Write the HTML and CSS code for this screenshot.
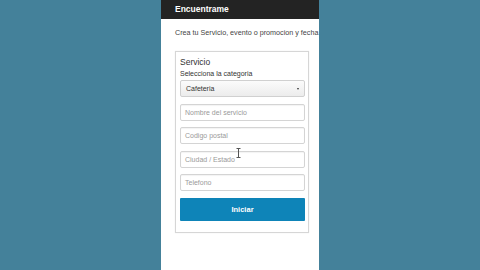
FILE: index.html
```html
<!DOCTYPE html>
<html>
<head>
<meta charset="utf-8">
<link rel="stylesheet" href="styles.css">
</head>
<body>
<div class="stage">
  <div class="phone">
    <div class="topbar">Encuentrame</div>
    <p class="intro">Crea tu Servicio, evento o promocion y fecha</p>
    <div class="card">
      <div class="title">Servicio</div>
      <div class="label">Selecciona la categoria</div>
      <div class="select"><span>Cafeteria</span><span class="caret"></span></div>
      <div class="input">Nombre del servicio</div>
      <div class="input">Codigo postal</div>
      <div class="input">Ciudad / Estado</div>
      <div class="input">Telefono</div>
      <div class="button">Iniciar</div>
    </div>
    <svg class="ibeam" width="5" height="10" viewBox="0 0 5 10"><path d="M0.5 0.5h4M2.5 0.5v9M0.5 9.5h4" stroke="#555" stroke-width="1" fill="none"/></svg>
  </div>
</div>
</body>
</html>
```

FILE: styles.css
```css
html, body {
  margin: 0;
  padding: 0;
}
body {
  background: #44819a;
  width: 480px;
  height: 270px;
  overflow: hidden;
  font-family: "Liberation Sans", Arial, sans-serif;
}
.stage {
  display: flex;
  justify-content: center;
  height: 270px;
}
.phone {
  position: relative;
  width: 158px;
  height: 270px;
  background: #fff;
  overflow: hidden;
}
.topbar {
  height: 19px;
  background: #232323;
  color: #fff;
  font-weight: bold;
  font-size: 8.5px;
  line-height: 19px;
  padding-left: 14px;
}
.intro {
  margin: 0;
  padding: 9px 0 0 14px;
  height: 23px;
  box-sizing: border-box;
  font-size: 7.2px;
  line-height: 10px;
  color: #444;
  white-space: nowrap;
}
.card {
  margin: 9px 0 0 14px;
  width: 134px;
  height: 182px;
  box-sizing: border-box;
  border: 1px solid #d6d6d6;
  box-shadow: 0 0 1px #e4e4e4;
  padding: 5px 3px 0 4px;
  display: flex;
  flex-direction: column;
}
.title {
  font-size: 8.5px;
  line-height: 11px;
  color: #333;
}
.label {
  margin-top: 1px;
  font-size: 7px;
  line-height: 9px;
  color: #333;
}
.select {
  margin-top: 2px;
  height: 17px;
  flex: none;
  box-sizing: border-box;
  border: 1px solid #d0d0d0;
  border-radius: 2px;
  background: linear-gradient(#fbfbfb, #ececec);
  font-size: 7px;
  color: #333;
  padding: 0 5px 0 5px;
  display: flex;
  align-items: center;
  justify-content: space-between;
}
.caret {
  width: 0;
  height: 0;
  border-left: 1.5px solid transparent;
  border-right: 1.5px solid transparent;
  border-top: 2px solid #333;
}
.input {
  margin-top: 6.5px;
  height: 17px;
  flex: none;
  box-sizing: border-box;
  border: 1px solid #d4d4d4;
  border-radius: 2px;
  box-shadow: inset 0 1px 1px rgba(0,0,0,0.05);
  font-size: 7px;
  line-height: 15px;
  color: #9a9a9a;
  padding-left: 4px;
}
.button {
  margin-top: 7px;
  height: 23px;
  flex: none;
  background: #0e84b8;
  border-radius: 1px;
  color: #fff;
  font-size: 7.5px;
  font-weight: bold;
  display: flex;
  align-items: center;
  justify-content: center;
}
.ibeam {
  position: absolute;
  left: 75px;
  top: 148px;
}
```
